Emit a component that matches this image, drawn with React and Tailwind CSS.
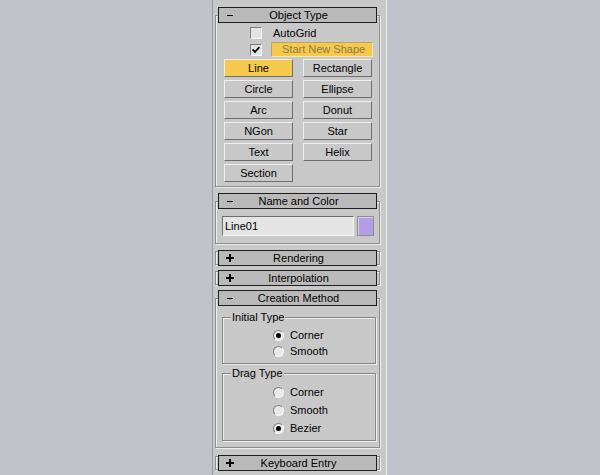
const font = { fontFamily: '"Liberation Sans", Arial, sans-serif' };

function Sign({ open }) {
  return (
    <span className={`absolute left-[7px] w-[8px] h-[8px] ${open ? 'top-[6px]' : 'top-[3px]'}`}>
      {open ? (
        <span className="absolute left-[1px] top-[1px] w-[6px] h-[1px] bg-black" />
      ) : (
        <>
          <span className="absolute left-0 top-[3px] w-[8px] h-[2px] bg-black" />
          <span className="absolute left-[3px] top-0 w-[2px] h-[8px] bg-black" />
        </>
      )}
    </span>
  );
}

function Header({ title, open, className }) {
  return (
    <div
      className={`relative h-[16px] w-[159px] ml-[2px] border border-[#1e1e1e] bg-[#b9b9b9] flex items-center justify-center text-[11px] leading-none text-black ${className}`}
    >
      <Sign open={open} />
      <span className="pl-[2px]">{title}</span>
    </div>
  );
}

const frame = 'w-[165px] ml-[2px] border border-[#8c8c8c] shadow-[inset_1px_1px_0_#ececec,1px_1px_0_#ececec]';

function OpenRollout({ title, className, children }) {
  return (
    <div className={`${frame} ${className}`}>
      <Header title={title} open className="-mt-[9px]" />
      {children}
    </div>
  );
}

function ClosedRollout({ title, className }) {
  return (
    <div className={`${frame} h-[14px] ${className}`}>
      <Header title={title} className="-mt-[2px]" />
    </div>
  );
}

function Btn({ label, active }) {
  return (
    <div
      className={`h-[18px] w-[69px] flex items-center justify-center text-[11px] leading-none border border-t-[#efefef] border-l-[#efefef] border-b-[#6e6e6e] border-r-[#6e6e6e] ${
        active ? 'bg-[#f5c94b]' : 'bg-[#c8c8c8]'
      }`}
    >
      {label}
    </div>
  );
}

function Check({ checked }) {
  return (
    <span className="relative w-[12px] h-[12px] border border-t-[#7e7e7e] border-l-[#7e7e7e] border-b-[#f2f2f2] border-r-[#f2f2f2] bg-[#e3e3e3] flex items-center justify-center">
      {checked && (
        <svg width="8" height="8" viewBox="0 0 8 8">
          <path d="M0.5 3.5 L3 6 L7.5 1" stroke="#000" strokeWidth="1.8" fill="none" />
        </svg>
      )}
    </span>
  );
}

function Radio({ label, checked }) {
  return (
    <div className="h-full flex items-center gap-[6px] pl-[50px] text-[11px]">
      <span className="w-[11px] h-[11px] rounded-full border border-t-[#7e7e7e] border-l-[#7e7e7e] border-b-[#f6f6f6] border-r-[#f6f6f6] bg-[#e9e9e9] flex items-center justify-center">
        {checked && <span className="w-[5px] h-[5px] rounded-full bg-black" />}
      </span>
      <span>{label}</span>
    </div>
  );
}

function Group({ label, className, children }) {
  return (
    <div className={`relative ml-[6px] w-[154px] border border-[#868686] shadow-[inset_1px_1px_0_#ececec,1px_1px_0_#ececec] ${className}`}>
      <span className="absolute left-[8px] -top-[8px] px-[1px] bg-[#c8c8c8] text-[11px] leading-[14px]">{label}</span>
      {children}
    </div>
  );
}

export default function App() {
  const shapes = ['Line', 'Rectangle', 'Circle', 'Ellipse', 'Arc', 'Donut', 'NGon', 'Star', 'Text', 'Helix', 'Section'];

  return (
    <div className="w-[600px] h-[475px] bg-[#c0c3ca] overflow-hidden" style={font}>
      <div className="ml-[212px] w-[175px] h-[475px] bg-[#c8c8c8] border-l border-l-[#9c9c9c] border-r border-r-[#ececec] pt-[7px] text-black">
        {/* Object Type */}
        <OpenRollout title="Object Type" className="mt-[8px] pb-[4px]">
          <div className="mt-[4px] ml-[34px] h-[12px] flex items-center gap-[11px] text-[11px]">
            <Check />
            <span>AutoGrid</span>
          </div>
          <div className="mt-[3px] ml-[34px] h-[15px] flex items-center gap-[9px] text-[11px]">
            <Check checked />
            <span className="h-[15px] w-[102px] pl-[10px] flex items-center bg-[#f5c94b] border border-t-[#b9a466] border-l-[#b9a466] border-b-[#f7e4a8] border-r-[#f7e4a8] text-[#8e7c48]">
              Start New Shape
            </span>
          </div>
          <div className="mt-[2px] ml-[8px] grid grid-cols-[69px_69px] gap-x-[10px] gap-y-[3px]">
            {shapes.map((s) => (
              <Btn key={s} label={s} active={s === 'Line'} />
            ))}
          </div>
        </OpenRollout>

        {/* Name and Color */}
        <OpenRollout title="Name and Color" className="mt-[14px] pb-[7px]">
          <div className="mt-[7px] ml-[6px] flex gap-[3px]">
            <div className="h-[20px] w-[132px] border border-t-[#6e6e6e] border-l-[#6e6e6e] border-b-[#f4f4f4] border-r-[#f4f4f4] bg-[#e4e4e4] flex items-center pl-[2px] text-[11px]">
              Line01
            </div>
            <div className="h-[20px] w-[17px] border border-[#8e8e8e] shadow-[inset_1px_1px_0_#d6cdf0] bg-[#b49ce6]" />
          </div>
        </OpenRollout>

        <ClosedRollout title="Rendering" className="mt-[7px]" />
        <ClosedRollout title="Interpolation" className="mt-[6px]" />

        {/* Creation Method */}
        <OpenRollout title="Creation Method" className="mt-[13px] pb-[6px]">
          <Group label="Initial Type" className="mt-[11px] pt-[9px] pb-[4px]">
            <div className="h-[16px]"><Radio label="Corner" checked /></div>
            <div className="h-[16px]"><Radio label="Smooth" /></div>
          </Group>
          <Group label="Drag Type" className="mt-[9px] pt-[9px] pb-[3px]">
            <div className="h-[18px]"><Radio label="Corner" /></div>
            <div className="h-[18px]"><Radio label="Smooth" /></div>
            <div className="h-[18px]"><Radio label="Bezier" checked /></div>
          </Group>
        </OpenRollout>

        <ClosedRollout title="Keyboard Entry" className="mt-[8px]" />
      </div>
    </div>
  );
}
